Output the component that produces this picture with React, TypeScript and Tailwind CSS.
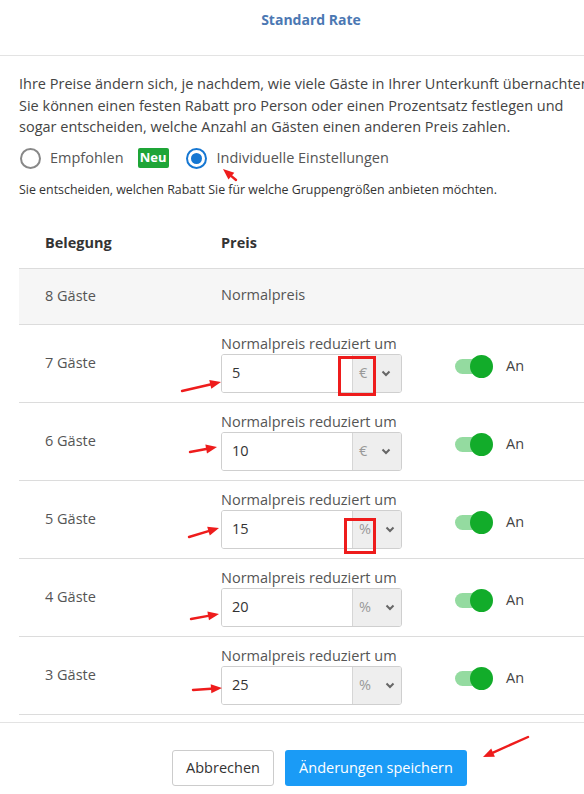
import React from "react";

const rows = [
  { g: "7 Gäste", v: "5", u: "€" },
  { g: "6 Gäste", v: "10", u: "€" },
  { g: "5 Gäste", v: "15", u: "%" },
  { g: "4 Gäste", v: "20", u: "%" },
  { g: "3 Gäste", v: "25", u: "%" },
];

function Arrow({ x1, y1, x2, y2 }: { x1: number; y1: number; x2: number; y2: number }) {
  const dx = x2 - x1;
  const dy = y2 - y1;
  const len = Math.sqrt(dx * dx + dy * dy);
  const ux = dx / len;
  const uy = dy / len;
  const hl = 11;
  const hw = 4.5;
  const bx = x2 - ux * hl;
  const by = y2 - uy * hl;
  const p1 = `${x2},${y2}`;
  const p2 = `${bx - uy * hw},${by + ux * hw}`;
  const p3 = `${bx + uy * hw},${by - ux * hw}`;
  return (
    <g>
      <line x1={x1} y1={y1} x2={bx} y2={by} stroke="#ee1c1c" strokeWidth={2.4} strokeLinecap="round" />
      <polygon points={`${p1} ${p2} ${p3}`} fill="#ee1c1c" />
    </g>
  );
}

export default function App() {
  return (
    <div className="relative w-[584px] h-[794px] overflow-hidden bg-white font-['Open_Sans',sans-serif] text-[#444]">
      <div className="w-[622px]">
        <div className="h-[56px] border-b border-[#e3e3e3] pt-[7px] text-center">
          <span className="text-[14px] font-bold text-[#4b78b3] leading-[22px]">Standard Rate</span>
        </div>
        <div className="pl-[19px]">
          <p className="mt-[17px] text-[14.5px] leading-[21.5px] text-[#444] whitespace-nowrap">
            Ihre Preise ändern sich, je nachdem, wie viele Gäste in Ihrer Unterkunft übernachten.
            <br />
            Sie können einen festen Rabatt pro Person oder einen Prozentsatz festlegen und
            <br />
            sogar entscheiden, welche Anzahl an Gästen einen anderen Preis zahlen.
          </p>
          <div className="mt-[10px] flex items-center h-[21px]">
            <span className="ml-[1px] w-[21px] h-[21px] rounded-full border-2 border-[#888] box-border" />
            <span className="ml-[9px] text-[14.5px] text-[#555]">Empfohlen</span>
            <span className="ml-[14px] h-[20px] w-[31px] bg-[#1ea537] rounded-[2px] text-white text-[13px] font-bold flex items-center justify-center">
              Neu
            </span>
            <span className="ml-[17px] w-[21px] h-[21px] rounded-full border-2 border-[#1677d2] box-border flex items-center justify-center">
              <span className="w-[11px] h-[11px] rounded-full bg-[#1677d2]" />
            </span>
            <span className="ml-[10px] text-[14.5px] text-[#555]">Individuelle Einstellungen</span>
          </div>
          <div className="mt-[13px] text-[12.4px] leading-[16px] text-[#333] whitespace-nowrap">
            Sie entscheiden, welchen Rabatt Sie für welche Gruppengrößen anbieten möchten.
          </div>
          <div className="mt-[21px]">
            <div className="h-[50px] flex items-center border-b border-[#dcdcdc] text-[14.5px] font-bold text-[#333]">
              <div className="w-[202px] pl-[26px]">Belegung</div>
              <div>Preis</div>
            </div>
            <div className="h-[56px] flex items-center bg-[#f6f6f6] border-b border-[#dcdcdc] text-[14.5px] text-[#555]">
              <div className="w-[202px] pl-[26px]">8 Gäste</div>
              <div className="-mt-[2px]">Normalpreis</div>
            </div>
            {rows.map((r) => (
              <div key={r.g} className="h-[78px] flex items-center border-b border-[#dcdcdc] text-[14.5px] text-[#555]">
                <div className="w-[202px] pl-[26px]">{r.g}</div>
                <div className="flex flex-col w-[181px]">
                  <div className="leading-[20px] text-[14.5px] text-[#555] whitespace-nowrap">Normalpreis reduziert um</div>
                  <div className="h-[39px] flex border border-[#cfcfcf] rounded-[3px] overflow-hidden">
                    <div className="flex-1 flex items-center pl-[10px] text-[#333] bg-white">{r.v}</div>
                    <div className="w-[49px] bg-[#eeeeee] border-l border-[#d6d6d6] flex items-center">
                      <span className="ml-[6px] text-[#999] text-[14.5px]">{r.u}</span>
                      <svg className="ml-[14px]" width="10" height="7" viewBox="0 0 10 7">
                        <path d="M1.5 1.5 L5 5 L8.5 1.5" fill="none" stroke="#666" strokeWidth="2" />
                      </svg>
                    </div>
                  </div>
                </div>
                <div className="ml-[53px] mt-[6px] relative w-[39px] h-[24px] flex items-center">
                  <div className="w-[32px] h-[15px] rounded-full bg-[#94dba0]" />
                  <div className="absolute left-[15px] top-[1px] w-[23px] h-[23px] rounded-full bg-[#12ac2a]" />
                </div>
                <div className="ml-[12px] mt-[6px] text-[14.5px] text-[#444]">An</div>
              </div>
            ))}
          </div>
        </div>
        <div className="mt-[7px] border-t border-[#e3e3e3] pt-[27px] flex pl-[172px] gap-[11px]">
          <button className="w-[102px] h-[36px] border border-[#ccc] rounded-[3px] bg-white text-[14.5px] text-[#333]">
            Abbrechen
          </button>
          <button className="w-[182px] h-[36px] rounded-[3px] bg-[#1a9bf6] text-[14.5px] text-white">
            Änderungen speichern
          </button>
        </div>
      </div>
      <svg className="absolute inset-0 pointer-events-none" width="584" height="794" viewBox="0 0 584 794">
        <rect x="339.5" y="357.5" width="35" height="37" fill="none" stroke="#ee1c1c" strokeWidth="3" />
        <rect x="345.5" y="519.5" width="29" height="33" fill="none" stroke="#ee1c1c" strokeWidth="3" />
        <Arrow x1={182} y1={391} x2={221} y2={382} />
        <Arrow x1={190} y1={452} x2={217} y2={447} />
        <Arrow x1={189} y1={537} x2={219} y2={528} />
        <Arrow x1={191} y1={619} x2={219} y2={614} />
        <Arrow x1={193} y1={690} x2={222} y2={688} />
        <Arrow x1={236} y1={180} x2={223} y2={169} />
        <Arrow x1={528} y1={737} x2={483} y2={757} />
      </svg>
    </div>
  );
}
